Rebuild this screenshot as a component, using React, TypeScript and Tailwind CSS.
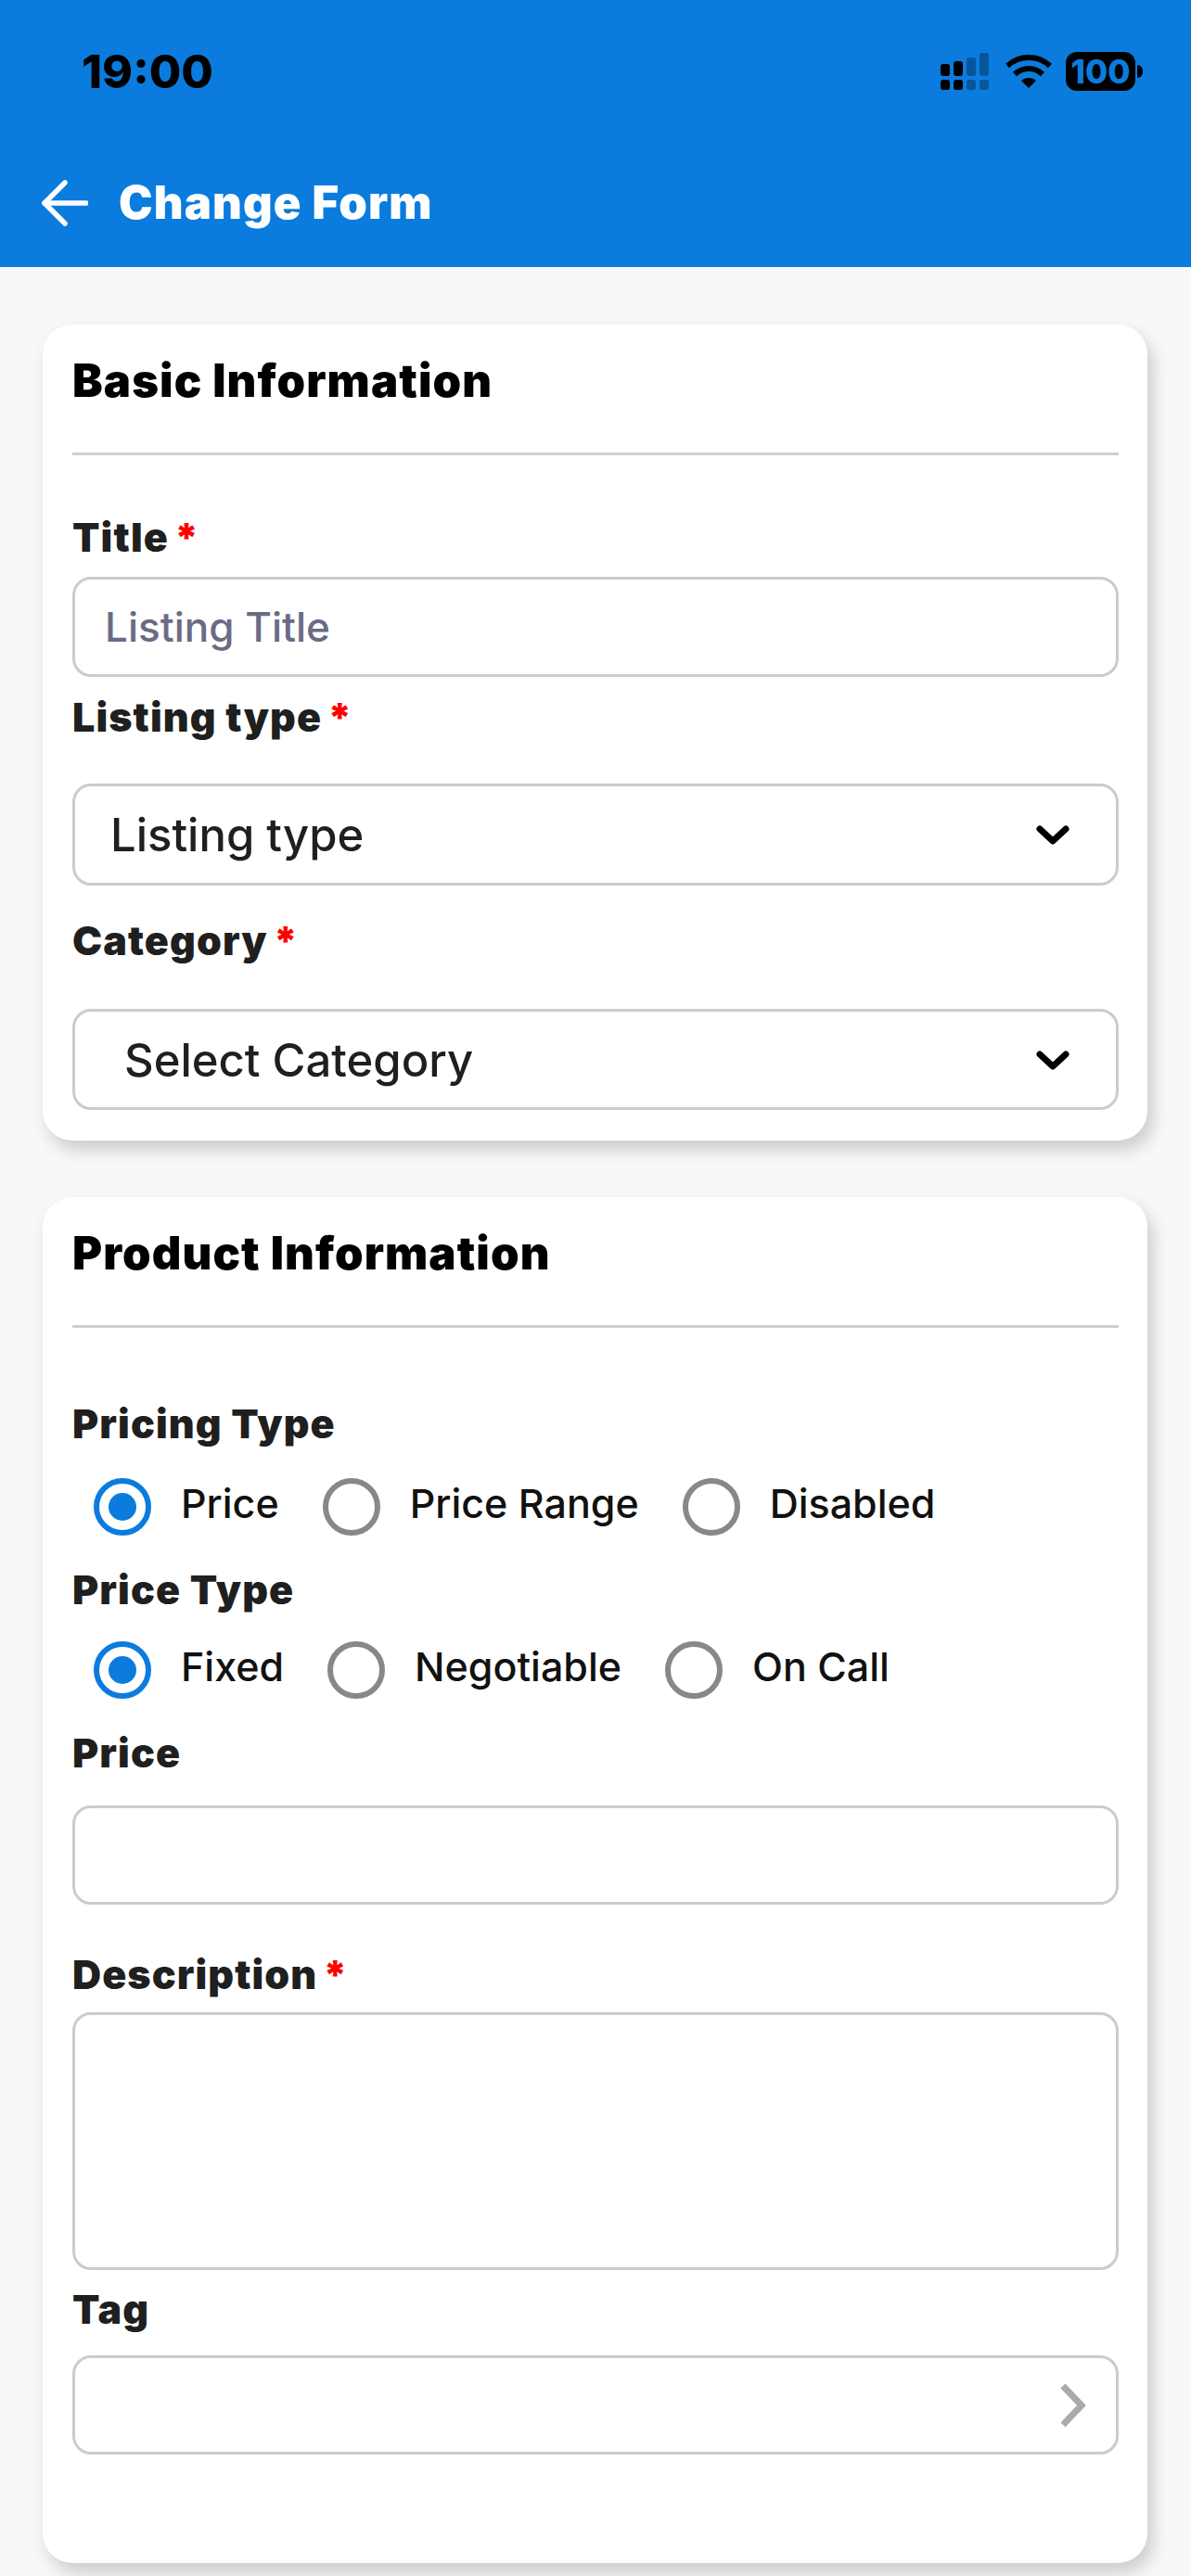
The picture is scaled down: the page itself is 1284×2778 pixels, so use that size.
import React from "react";

const FONT = "font-['Inter','Liberation_Sans',sans-serif]";

function Label({ text, required, className }: { text: string; required?: boolean; className: string }) {
  return (
    <div className={`flex h-[50px] items-center text-[43px] font-black leading-[50px] tracking-[1.1px] text-[#1f1f1f] ${className}`}>
      <span>{text}</span>
      {required && <span className="ml-[6px] text-[#ff0000]">*</span>}
    </div>
  );
}

function SectionTitle({ text }: { text: string }) {
  return (
    <>
      <h2 className="pt-[1px] text-[49px] font-black leading-[60px] tracking-[1.1px] text-black">{text}</h2>
      <div className="mt-[47px] h-[3px] bg-[#cfcfcf]" />
    </>
  );
}

function Select({ text, className, pad }: { text: string; className: string; pad: string }) {
  return (
    <div className={`flex items-center justify-between rounded-[20px] border-[3px] border-[#cccccc] bg-white pr-[50px] ${pad} ${className}`}>
      <span className="pt-[2px] text-[49px] font-medium leading-[56px] text-[#1f1f1f]">{text}</span>
      <svg width="36" height="22" viewBox="0 0 36 22" fill="none" stroke="#000" strokeWidth="7" strokeLinecap="round" strokeLinejoin="round">
        <path d="M4 5l14 13L32 5" />
      </svg>
    </div>
  );
}

function Radio({ label, selected }: { label: string; selected?: boolean }) {
  return (
    <div className="flex items-center gap-[32px]">
      <div className={`flex h-[62px] w-[62px] items-center justify-center rounded-full border-[6px] ${selected ? "border-[#0b7cde]" : "border-[#888888]"}`}>
        {selected && <div className="h-[30px] w-[30px] rounded-full bg-[#0b7cde]" />}
      </div>
      <span className="pb-[9px] text-[43px] font-medium leading-[50px] text-[#111111]">{label}</span>
    </div>
  );
}

function SignalIcon() {
  return (
    <svg width="52" height="40" viewBox="0 0 52 40" fill="#000">
      <rect x="0" y="12" width="10" height="13" rx="3" />
      <rect x="14" y="9" width="10" height="16" rx="3" />
      <rect x="28" y="5" width="10" height="20" rx="3" opacity="0.3" />
      <rect x="42" y="0" width="10" height="25" rx="3" opacity="0.3" />
      <rect x="0" y="29" width="10" height="11" rx="3" />
      <rect x="14" y="29" width="10" height="11" rx="3" />
      <rect x="28" y="29" width="10" height="11" rx="3" opacity="0.3" />
      <rect x="42" y="29" width="10" height="11" rx="3" opacity="0.3" />
    </svg>
  );
}

function WifiIcon() {
  return (
    <svg width="50" height="38" viewBox="0 0 50 38" fill="none" stroke="#000" strokeWidth="6">
      <path d="M2 13C15 1 35 1 48 13" />
      <path d="M10 22c9-8 21-8 30 0" />
      <path d="M25 37l-8-8c4-4 12-4 16 0z" fill="#000" stroke="none" />
    </svg>
  );
}

export default function App() {
  return (
    <div className={`min-h-screen w-full bg-[#f8f8f8] ${FONT}`}>
      <header className="flex h-[288px] flex-col bg-[#0b7cde]">
        <div className="mt-[49px] flex h-[56px] items-center justify-between pl-[88px] pr-[52px]">
          <span className="text-[50px] font-extrabold leading-[56px] text-black">19:00</span>
          <div className="flex items-center">
            <SignalIcon />
            <div className="ml-[18px]"><WifiIcon /></div>
            <div className="ml-[15px] flex h-[42px] w-[75px] items-center justify-center rounded-[12px] bg-black text-[35px] font-extrabold leading-none text-[#0b7cde]">100</div>
            <div className="ml-[2px] h-[14px] w-[6px] rounded-r-full bg-black" />
          </div>
        </div>
        <div className="mt-[84px] flex h-[60px] items-center pl-[45px]">
          <svg width="50" height="50" viewBox="0 0 50 50" fill="none" stroke="#fff" strokeWidth="5.5" strokeLinecap="round" strokeLinejoin="round">
            <path d="M48 25H3" />
            <path d="M25 3L3 25l22 22" />
          </svg>
          <span className="ml-[33px] text-[49px] font-black leading-[60px] tracking-[1.1px] text-white">Change Form</span>
        </div>
      </header>

      <main className="flex flex-col gap-[61px] pl-[46px] pr-[47px] pt-[62px]">
        <section className="rounded-[32px] bg-white pb-[33px] pl-[32px] pr-[31px] pt-[30px] shadow-[6px_10px_18px_rgba(0,0,0,0.18)]">
          <SectionTitle text="Basic Information" />
          <Label text="Title" required className="mt-[63px]" />
          <input
            placeholder="Listing Title"
            className="mt-[18px] block h-[108px] w-full rounded-[20px] border-[3px] border-[#cccccc] px-[32px] text-[44px] font-medium outline-none placeholder:text-[#6b6b85]"
          />
          <Label text="Listing type" required className="mt-[18px]" />
          <Select text="Listing type" pad="pl-[38px]" className="mt-[47px] h-[110px]" />
          <Label text="Category" required className="mt-[34px]" />
          <Select text="Select Category" pad="pl-[53px]" className="mt-[49px] h-[109px]" />
        </section>

        <section className="rounded-[32px] bg-white pb-[117px] pl-[32px] pr-[31px] pt-[30px] shadow-[6px_10px_18px_rgba(0,0,0,0.18)]">
          <SectionTitle text="Product Information" />
          <Label text="Pricing Type" className="mt-[78px]" />
          <div className="mt-[34px] flex gap-[47px] pl-[23px]">
            <Radio label="Price" selected />
            <Radio label="Price Range" />
            <Radio label="Disabled" />
          </div>
          <Label text="Price Type" className="mt-[33px]" />
          <div className="mt-[31px] flex gap-[47px] pl-[23px]">
            <Radio label="Fixed" selected />
            <Radio label="Negotiable" />
            <Radio label="On Call" />
          </div>
          <Label text="Price" className="mt-[33px]" />
          <input className="mt-[32px] block h-[107px] w-full rounded-[20px] border-[3px] border-[#cccccc] outline-none" />
          <Label text="Description" required className="mt-[50px]" />
          <textarea className="mt-[16px] block h-[278px] w-full resize-none rounded-[20px] border-[3px] border-[#cccccc] outline-none" />
          <Label text="Tag" className="mt-[17px]" />
          <div className="mt-[25px] flex h-[107px] items-center justify-end rounded-[20px] border-[3px] border-[#cccccc] pr-[31px]">
            <svg width="30" height="48" viewBox="0 0 30 48" fill="none" stroke="#aaaaaa" strokeWidth="7" strokeLinejoin="miter">
              <path d="M4 3l20 21L4 45" />
            </svg>
          </div>
        </section>
      </main>
    </div>
  );
}
